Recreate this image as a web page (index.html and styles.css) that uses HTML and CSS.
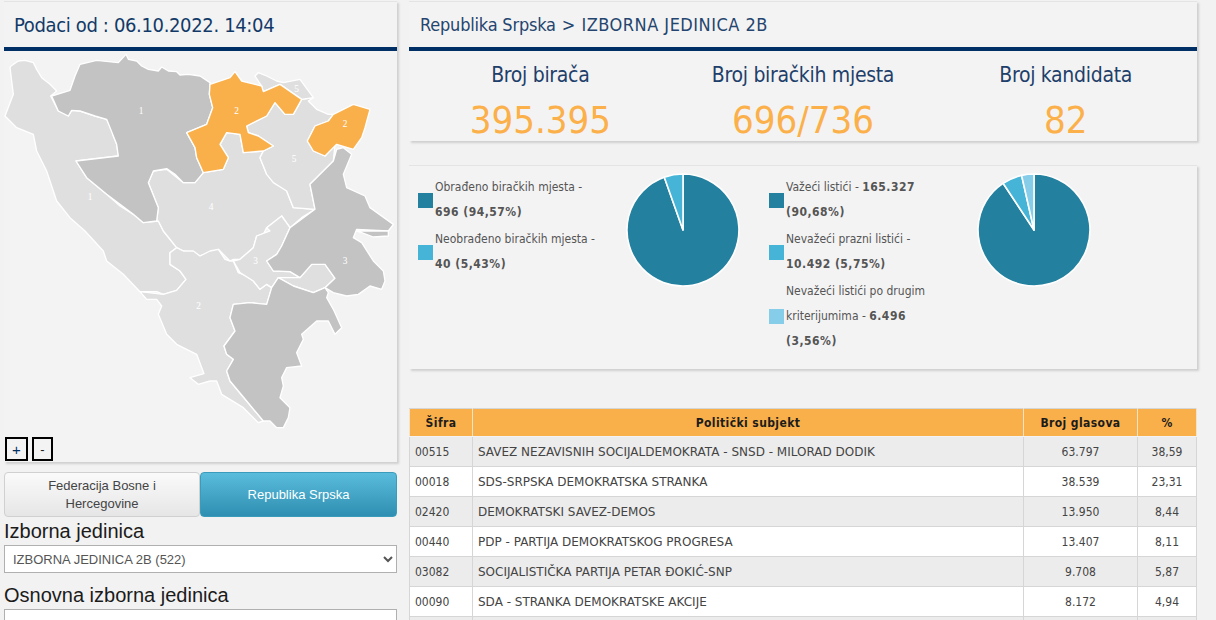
FILE: index.html
```html
<!DOCTYPE html>
<html lang="bs">
<head>
<meta charset="utf-8">
<title>Izbori</title>
<link rel="stylesheet" href="styles.css">
</head>
<body>
<div class="page">
  <aside class="side">
    <section class="panel map-panel">
      <h1 class="panel-title">Podaci od : 06.10.2022. 14:04</h1>
      <div class="map-wrap">
        <svg class="map" viewBox="12 150 1179 1236" aria-label="Karta">
          <g class="reg">
            <polygon points="33,195 55,180 75,178 100,185 110,205 125,230 150,250 170,270 152,285 175,330 205,345 215,328 240,330 285,345 320,355 335,385 340,405 350,430 355,465 228,480 260,530 320,580 360,615 400,640 430,665 475,660 490,690 530,740 510,755 510,790 540,810 558,835 530,868 490,880 470,872 420,872 370,820 320,780 310,750 255,690 210,650 170,600 140,510 110,450 100,400 50,380 15,345 40,280 30,200"/>
            <polygon points="610,515 670,505 685,470 660,430 680,395 720,400 730,455 790,450 780,470 800,520 860,570 880,620 945,625 905,650 870,680 845,645 800,680 790,700 810,690 770,705 760,740 720,775 700,775 690,780 655,745 600,765 550,750 530,740 490,690 475,660 470,660 475,620 445,545 460,510 500,505 550,545 585,545"/>
            <polygon points="510,755 530,740 550,750 580,750 600,765 630,750 655,745 675,775 690,780 700,780 715,815 740,825 760,840 780,865 800,850 815,860 800,910 750,905 700,910 690,950 705,990 672,1035 680,1060 700,1075 680,1110 690,1140 740,1200 790,1260 775,1265 730,1220 665,1180 650,1140 630,1140 595,1150 570,1130 612,1118 590,1060 530,1030 500,1000 475,940 485,915 470,895 440,895 420,872 490,880 530,868 558,835 540,810 510,790"/>
            <polygon points="700,780 720,775 760,740 770,705 810,690 800,680 845,645 870,680 845,735 830,760 800,780 820,810 870,812 900,830 835,830 815,860 800,850 780,865 760,840 720,815"/>
            <polygon points="900,830 935,790 975,790 1005,832 975,860 940,875 880,855 835,830"/>
            <polygon points="825,305 855,340 880,340 905,295 940,290 925,300 950,325 985,340 1000,340 985,360 945,375 922,420 940,450 975,465 1005,430 1000,480 930,550 945,625 880,620 860,570 820,545 800,520 780,470 790,450 820,435 775,405 745,395 740,375 800,345"/>
            <polygon points="765,225 775,215 800,225 830,240 850,245 900,235 940,290 905,295 840,250 790,272 785,255"/>
          </g>
          <g class="reg dark">
            <polygon points="155,285 210,268 225,225 240,190 290,178 355,185 378,160 385,175 410,180 425,195 445,205 475,210 485,198 505,210 530,212 540,222 565,220 600,225 630,245 628,280 638,320 620,370 560,395 585,440 590,470 610,515 585,545 550,545 525,520 500,503 460,510 445,545 475,620 470,660 430,665 400,640 320,580 260,530 228,480 355,465 350,430 340,405 320,355 285,345 240,330 215,328 205,345 175,330"/>
            <polygon points="1010,445 1030,440 1055,460 1030,520 1040,560 1095,585 1110,620 1180,670 1165,690 1070,685 1060,710 1085,725 1120,780 1150,810 1155,840 1145,865 1110,855 1075,880 1040,885 1000,875 975,860 1005,832 975,790 935,790 900,830 870,812 820,810 800,780 830,760 845,735 870,680 945,625 930,550 1000,480"/>
            <polygon points="835,830 880,855 940,875 975,860 985,875 980,890 1000,925 1025,980 1005,1000 985,960 950,960 905,1000 910,1015 890,1055 905,1095 860,1100 845,1130 850,1155 840,1190 870,1220 865,1250 850,1280 830,1280 810,1260 790,1260 740,1200 690,1140 680,1110 700,1075 680,1060 672,1035 705,990 690,950 700,910 750,905 800,910 815,860"/>
            <polygon points="1070,690 1165,690 1165,705 1120,708 1085,695"/>
          </g>
          <g class="reg won">
            <polygon points="630,250 690,230 705,212 725,240 785,255 790,272 840,250 905,295 880,340 855,340 825,305 800,345 740,375 745,395 775,405 820,435 790,450 730,455 720,400 680,395 660,430 685,470 670,505 610,515 590,470 585,440 560,395 620,370 638,320 628,280"/>
            <polygon points="945,375 985,360 1000,340 1060,310 1110,325 1095,380 1085,410 1060,445 1010,430 975,465 940,450 922,420"/>
          </g>
          <g class="labels">
            <text x="423" y="338">1</text>
            <text x="710" y="338">2</text>
            <text x="1035" y="378">2</text>
            <text x="890" y="272">5</text>
            <text x="882" y="482">5</text>
            <text x="270" y="597">1</text>
            <text x="633" y="627">4</text>
            <text x="767" y="788">3</text>
            <text x="1035" y="788">3</text>
            <text x="596" y="925">2</text>
          </g>
        </svg>
        <div class="zoom-btns">
          <button class="zoom-btn plus" type="button">+</button>
          <button class="zoom-btn minus" type="button">-</button>
        </div>
      </div>
    </section>

    <div class="tabs">
      <button class="tab" type="button">Federacija Bosne i Hercegovine</button>
      <button class="tab active" type="button">Republika Srpska</button>
    </div>

    <label class="field-label">Izborna jedinica</label>
    <select class="field">
      <option>IZBORNA JEDINICA 2B (522)</option>
    </select>
    <label class="field-label second">Osnovna izborna jedinica</label>
    <select class="field"><option></option></select>
  </aside>

  <main class="main">
    <section class="panel summary">
      <h2 class="panel-title crumb"><span class="crumb-entity">Republika Srpska</span><span class="crumb-sep">&gt;</span><span class="crumb-unit">IZBORNA JEDINICA 2B</span></h2>
      <div class="stats">
        <div class="stat"><div class="stat-label">Broj birača</div><div class="stat-value">395.395</div></div>
        <div class="stat"><div class="stat-label">Broj biračkih mjesta</div><div class="stat-value">696/736</div></div>
        <div class="stat"><div class="stat-label">Broj kandidata</div><div class="stat-value">82</div></div>
      </div>
    </section>

    <section class="panel charts">
      <div class="chart">
        <ul class="legend">
          <li><span class="swatch c1"></span><span>Obrađeno biračkih mjesta - <b>696 (94,57%)</b></span></li>
          <li><span class="swatch c2"></span><span>Neobrađeno biračkih mjesta - <b>40 (5,43%)</b></span></li>
        </ul>
        <svg class="pie" viewBox="-57 -57 114 114">
          <path class="c1f" d="M0 0L0 -56A56 56 0 1 1 -18.7 -52.8Z"/>
          <path class="c2f" d="M0 0L-18.7 -52.8A56 56 0 0 1 0 -56Z"/>
        </svg>
      </div>
      <div class="chart">
        <ul class="legend">
          <li><span class="swatch c1"></span><span>Važeći listići - <b>165.327 (90,68%)</b></span></li>
          <li><span class="swatch c2"></span><span>Nevažeći prazni listići - <b>10.492 (5,75%)</b></span></li>
          <li><span class="swatch c3"></span><span>Nevažeći listići po drugim kriterijumima - <b>6.496 (3,56%)</b></span></li>
        </ul>
        <svg class="pie" viewBox="-57 -57 114 114">
          <path class="c1f" d="M0 0L0 -56A56 56 0 1 1 -30.9 -46.7Z"/>
          <path class="c2f" d="M0 0L-30.9 -46.7A56 56 0 0 1 -12.4 -54.6Z"/>
          <path class="c3f" d="M0 0L-12.4 -54.6A56 56 0 0 1 0 -56Z"/>
        </svg>
      </div>
    </section>

    <table class="results">
      <thead>
        <tr><th class="col-id">Šifra</th><th>Politički subjekt</th><th class="col-votes">Broj glasova</th><th class="col-pct">%</th></tr>
      </thead>
      <tbody>
        <tr><td>00515</td><td class="name">SAVEZ NEZAVISNIH SOCIJALDEMOKRATA - SNSD - MILORAD DODIK</td><td class="num">63.797</td><td class="num">38,59</td></tr>
        <tr><td>00018</td><td class="name">SDS-SRPSKA DEMOKRATSKA STRANKA</td><td class="num">38.539</td><td class="num">23,31</td></tr>
        <tr><td>02420</td><td class="name">DEMOKRATSKI SAVEZ-DEMOS</td><td class="num">13.950</td><td class="num">8,44</td></tr>
        <tr><td>00440</td><td class="name">PDP - PARTIJA DEMOKRATSKOG PROGRESA</td><td class="num">13.407</td><td class="num">8,11</td></tr>
        <tr><td>03082</td><td class="name">SOCIJALISTIČKA PARTIJA PETAR ĐOKIĆ-SNP</td><td class="num">9.708</td><td class="num">5,87</td></tr>
        <tr><td>00090</td><td class="name">SDA - STRANKA DEMOKRATSKE AKCIJE</td><td class="num">8.172</td><td class="num">4,94</td></tr>
        <tr><td>&nbsp;</td><td></td><td></td><td></td></tr>
      </tbody>
    </table>
  </main>
</div>
</body>
</html>
```
FILE: styles.css
```css
* { box-sizing: border-box; }
html, body { height: 100%; }
body {
  margin: 0;
  background: #f2f2f2;
  overflow: hidden;
  font-family: "DejaVu Sans Condensed", "DejaVu Sans", sans-serif;
  font-stretch: condensed;
  color: #555;
}
.page {
  display: grid;
  grid-template-columns: 393px 788px;
  column-gap: 12px;
  padding: 1px 0 0 4px;
  align-items: start;
}
.panel {
  background: #f3f3f3;
  border-top: 1px solid #e4e4e4;
  box-shadow: 2px 2px 2px #cfcfcf;
}
.panel-title {
  margin: 0;
  height: 49px;
  padding: 0 10px;
  display: flex;
  align-items: center;
  border-bottom: 4px solid #002f66;
  font-size: 20px;
  font-weight: 400;
  letter-spacing: -0.35px;
  color: #123a68;
}
.crumb { font-size: 18px; letter-spacing: 0; color: #24456f; padding-left: 11px; }
.crumb-entity { letter-spacing: -0.2px; }
.crumb-sep { margin: 0 6px; }
.crumb-unit { letter-spacing: 0.5px; }

.map-panel { height: 461px; }
.map-wrap { position: relative; height: 411px; }
.map { display: block; width: 393px; height: 412px; }
.reg polygon { fill: #dfdfdf; stroke: #fff; stroke-width: 4; stroke-linejoin: round; }
.reg.dark polygon { fill: #c3c3c3; }
.reg.won polygon { fill: #fab04a; }
.labels text {
  fill: #fff;
  font-family: "Liberation Serif", serif;
  font-size: 28px;
  text-anchor: middle;
}
.zoom-btns { position: absolute; left: 1px; bottom: 1px; display: flex; gap: 4px; }
.zoom-btn {
  height: 24px;
  padding: 0;
  background: #f3f3f3;
  border: 2px solid #000;
  border-radius: 0;
  font-family: "Liberation Sans", sans-serif;
  font-size: 13px;
  color: #002f66;
}
.plus { width: 23px; font-size: 15px; }
.minus { width: 21px; color: #222; }

.tabs { display: grid; grid-template-columns: 196px 197px; margin-top: 10px; }
.tab {
  height: 45px;
  padding: 0 28px;
  font-family: "Liberation Sans", sans-serif;
  font-size: 13px;
  line-height: 18px;
  color: #444;
  background: linear-gradient(#fafafa, #e6e6e6);
  border: 1px solid #d0d0d0;
  border-radius: 4px;
}
.tab.active {
  color: #fff;
  background: linear-gradient(#5abcdc, #2f8fb2);
  border-color: #3a9bbb;
  padding: 0 8px;
}
.field-label {
  display: block;
  margin: 2px 0;
  font-family: "Liberation Sans", sans-serif;
  font-size: 20px;
  line-height: 24px;
  color: #1b1b1b;
}
.field-label.second { margin-top: 10px; }
.field {
  display: block;
  width: 393px;
  height: 28px;
  padding: 0 4px;
  background-color: #fff;
  border: 1px solid #b0b0b0;
  border-radius: 0;
  font-family: "Liberation Sans", sans-serif;
  font-size: 13px;
  color: #555;
}

.summary { height: 140px; }
.stats { display: grid; grid-template-columns: repeat(3, 1fr); text-align: center; }
.stat-label { margin-top: 10px; font-size: 21px; line-height: 29px; letter-spacing: -0.3px; color: #1f3f6b; }
.stat-value { margin-top: 10px; font-size: 38px; line-height: 40px; color: #fbb04a; }

.charts {
  display: grid;
  grid-template-columns: 351px 1fr;
  height: 204px;
  margin-top: 24px;
  padding: 9px 0 0 9px;
  font-size: 12px;
}
.chart { display: flex; align-items: flex-start; }
.legend { width: 182px; margin: 0; padding: 0; list-style: none; }
.legend li { display: flex; align-items: center; gap: 2px; margin-bottom: 2px; line-height: 25px; }
.legend b { color: #555; letter-spacing: 0.5px; }
.swatch { flex: none; width: 15px; height: 15px; }
.c1 { background: #23809e; }
.c2 { background: #46b4d6; }
.c3 { background: #86cdea; }
.pie { flex: none; width: 114px; height: 114px; margin: -2px 0 0 26px; }
.pie path { stroke: #fff; stroke-width: 1.6; stroke-linejoin: round; }
.c1f { fill: #23809e; }
.c2f { fill: #46b4d6; }
.c3f { fill: #86cdea; }

.results {
  width: 788px;
  margin-top: 39px;
  border-collapse: collapse;
  table-layout: fixed;
  font-size: 12px;
  color: #444;
}
.results th, .results td { border: 1px solid #d6d6d6; padding: 0 6px; }
.results td:first-child { padding-left: 5px; }
.results .name { padding-left: 5px; font-stretch: normal; font-family: "DejaVu Sans", sans-serif; }
.results th {
  height: 28px;
  background: #fab04a;
  color: #1c1c1c;
  font-weight: 700;
  font-size: 12px;
  letter-spacing: 0.4px;
  text-align: center;
  border-bottom-color: #f3f3f3;
  border-left-color: #f3e3c8;
  border-right-color: #f3e3c8;
}
.results td { height: 30px; }
.results tbody tr:nth-child(odd) { background: #ececec; }
.results tbody tr:nth-child(even) { background: #fff; }
.results .num { text-align: center; }
.col-id { width: 63px; }
.col-votes { width: 114px; }
.col-pct { width: 59px; }
```
